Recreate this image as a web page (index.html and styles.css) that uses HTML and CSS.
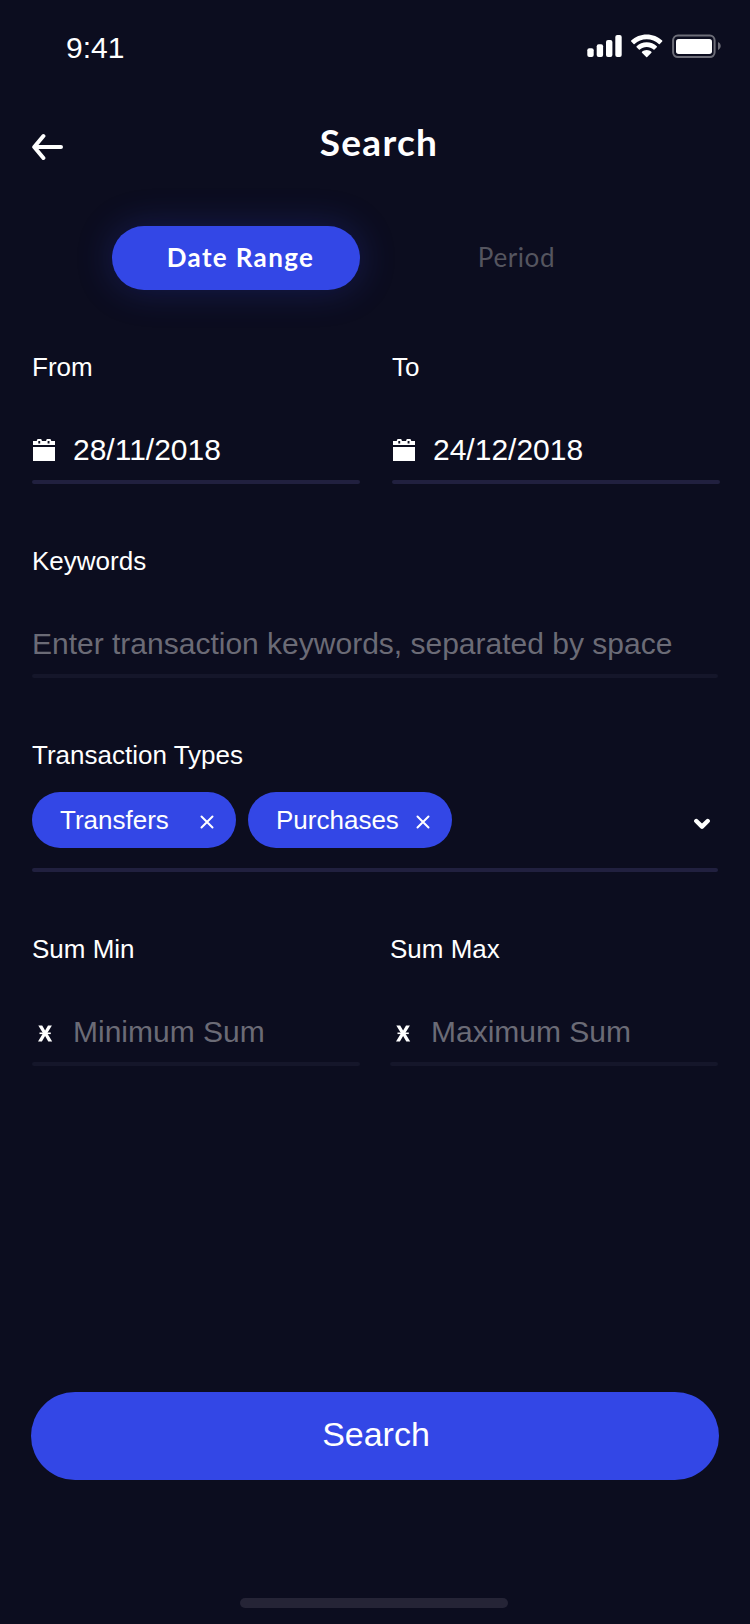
FILE: index.html
```html
<!DOCTYPE html>
<html lang="en">
<head>
<meta charset="utf-8">
<title>Search</title>
<link rel="stylesheet" href="styles.css">
</head>
<body>
<main class="screen">
  <div class="status">
    <span class="time">9:41</span>
    <svg class="status-icons" width="136" height="26" viewBox="0 0 136 26">
      <g fill="#fff">
        <rect x="0.3" y="15.3" width="6.4" height="8.7" rx="2"/>
        <rect x="9.7" y="11.3" width="6.4" height="12.7" rx="2"/>
        <rect x="19" y="7" width="6.4" height="17" rx="2"/>
        <rect x="28.3" y="2" width="6.4" height="22" rx="2"/>
        <path d="M59.7 17c1.800 0 3.500.7 4.700 1.800.3.300.3.700 0 1l-4.200 4.100c-.3.300-.7.300-1 0L55 19.800c-.3-.3-.3-.7 0-1 1.200-1.100 2.900-1.800 4.700-1.800z"/>
        <path d="M59.7 9.300c3.900 0 7.400 1.500 10.100 4 .3.300.3.700 0 1l-2.300 2.300c-.3.300-.7.300-1 0-1.800-1.700-4.200-2.700-6.800-2.700s-5 1-6.800 2.700c-.3.300-.7.300-1 0l-2.300-2.300c-.3-.3-.3-.7 0-1 2.700-2.500 6.200-4 10.100-4z"/>
        <path d="M59.700 1.600c6 0 11.400 2.300 15.500 6 .3.300.3.700 0 1l-2.400 2.400c-.3.300-.7.300-1 0-3.200-3-7.400-4.700-12.100-4.700s-8.900 1.700-12.100 4.700c-.3.300-.7.300-1 0l-2.400-2.400c-.3-.3-.3-.7 0-1 4.100-3.700 9.500-6 15.500-6z"/>
        <rect x="89" y="6" width="36" height="15" rx="2.700"/>
        <path d="M131 9v8c1.700-.7 2.700-2.300 2.700-4s-1-3.300-2.700-4z" opacity=".4"/>
      </g>
      <rect x="86.100" y="2.500" width="41.500" height="21.600" rx="4.800" fill="none" stroke="#fff" stroke-opacity=".4" stroke-width="2"/>
    </svg>
  </div>
  <header class="header">
    <svg class="back" width="32" height="28" viewBox="0 0 32 28" fill="none" stroke="#fff" stroke-width="4" stroke-linecap="round" stroke-linejoin="round"><path d="M11.400 3L2.200 14l9.200 11M2.400 14H29"/></svg>
    <h1 class="title">Search</h1>
  </header>
  <nav class="tabs">
    <span class="tab tab-active">Date Range</span>
    <span class="tab">Period</span>
  </nav>
  <section class="fields">
    <div class="row row-dates">
      <div class="field">
        <span class="label">From</span>
        <div class="value">
          <svg class="lead" width="24" height="24" viewBox="0 0 24 24" fill="#fff"><path fill-rule="evenodd" d="M1 3h3.700L5.500 1h3.700l.8 2h4l.8-2h3.700l.8 2H23v4H1zM6.300 3v2.500h1.900V3zM15.600 3v2.500h1.900V3zM1 9h22v14H1z"/></svg>
          <span class="text">28/11/2018</span>
        </div>
      </div>
      <div class="field">
        <span class="label">To</span>
        <div class="value">
          <svg class="lead" width="24" height="24" viewBox="0 0 24 24" fill="#fff"><path fill-rule="evenodd" d="M1 3h3.700L5.500 1h3.700l.8 2h4l.8-2h3.700l.8 2H23v4H1zM6.300 3v2.500h1.900V3zM15.600 3v2.500h1.900V3zM1 9h22v14H1z"/></svg>
          <span class="text">24/12/2018</span>
        </div>
      </div>
    </div>
    <div class="row">
      <div class="field field-dim">
        <span class="label">Keywords</span>
        <div class="value"><span class="text">Enter transaction keywords, separated by space</span></div>
      </div>
    </div>
    <div class="row">
      <div class="field">
        <span class="label">Transaction Types</span>
        <div class="chips">
          <span class="chip"><span>Transfers</span><svg class="remove" width="14" height="14" viewBox="0 0 14 14" stroke="#fff" stroke-width="2" stroke-linecap="round"><path d="M1.500 1.500l11 11M12.500 1.500l-11 11"/></svg></span>
          <span class="chip"><span>Purchases</span><svg class="remove" width="14" height="14" viewBox="0 0 14 14" stroke="#fff" stroke-width="2" stroke-linecap="round"><path d="M1.500 1.500l11 11M12.500 1.500l-11 11"/></svg></span>
          <svg class="chevron" width="18" height="12" viewBox="0 0 18 12" fill="none" stroke="#fff" stroke-width="4.400" stroke-linecap="round" stroke-linejoin="round"><path d="M3.300 3L9 8.600 14.700 3"/></svg>
        </div>
      </div>
    </div>
    <div class="row">
      <div class="field field-dim">
        <span class="label">Sum Min</span>
        <div class="value">
          <svg class="lead" width="24" height="24" viewBox="0 0 24 24" fill="#fff"><path d="M6.300 5.500h3.900l2.900 5 2.900-5h3.900l-4.700 7.700 5 8.300h-3.900l-3.200-5.600-3.200 5.600H6l5-8.300z"/><path d="M7.500 12.500h11.300v1.600H7.500z"/></svg>
          <span class="text">Minimum Sum</span>
        </div>
      </div>
      <div class="field field-dim">
        <span class="label">Sum Max</span>
        <div class="value">
          <svg class="lead" width="24" height="24" viewBox="0 0 24 24" fill="#fff"><path d="M6.300 5.500h3.900l2.900 5 2.900-5h3.900l-4.700 7.700 5 8.300h-3.900l-3.200-5.600-3.200 5.600H6l5-8.300z"/><path d="M7.500 12.500h11.300v1.600H7.500z"/></svg>
          <span class="text">Maximum Sum</span>
        </div>
      </div>
    </div>
  </section>
  <button class="submit">Search</button>
  <div class="home"></div>
</main>
</body>
</html>
```
FILE: styles.css
```css
* { box-sizing: border-box; }
body { margin: 0; background: #0c0d1f; }
svg { display: block; flex: none; }
.screen {
  width: 750px;
  height: 1624px;
  padding: 0 32px 16px;
  display: flex;
  flex-direction: column;
  background: #0c0d1f;
  color: #fff;
  font-family: "Liberation Sans", sans-serif;
}
.status {
  height: 112px;
  padding: 33px 0 0 34px;
  display: flex;
  justify-content: space-between;
  align-items: flex-start;
}
.time { font-size: 30px; line-height: 30px; }
.status-icons { margin-right: -5px; }
.header {
  height: 114px;
  display: grid;
  grid-template-columns: 32px 1fr 24px;
  align-items: start;
}
.back { margin-top: 21px; }
.title {
  margin: 8px 0 0;
  text-align: center;
  font: 700 37px/44px Lato, sans-serif;
  letter-spacing: 1.3px;
}
.tabs {
  width: 526px;
  height: 64px;
  margin-left: 80px;
  display: grid;
  grid-template-columns: 248px 1fr;
  gap: 32px;
}
.tab {
  padding-left: 3px;
  text-align: center;
  color: #55555f;
  font: 400 26px/62px Lato, sans-serif;
  letter-spacing: .6px;
}
.tab-active {
  padding-left: 9px;
  border-radius: 32px;
  background: #3347e6;
  box-shadow: 0 0 36px rgba(51, 71, 230, .25);
  color: #fff;
  font-weight: 700;
  letter-spacing: 1.35px;
}
.fields { padding-top: 58px; }
.row { height: 194px; display: flex; gap: 30px; }
.row-dates { gap: 32px; margin-right: -2px; }
.field {
  flex: 1;
  height: 136px;
  display: flex;
  flex-direction: column;
}
.field::after {
  content: "";
  height: 4px;
  margin-top: auto;
  border-radius: 2px;
  background: #21203f;
}
.field-dim::after { background: #15162a; }
.label { height: 44px; font-size: 26px; line-height: 38px; white-space: nowrap; }
.value { height: 84px; padding-top: 32px; display: flex; align-items: center; gap: 17px; }
.text { font-size: 30px; line-height: 34px; white-space: nowrap; }
.field-dim .text { color: #6b6b76; }
.chips { height: 56px; margin-top: 12px; display: flex; align-items: center; gap: 12px; }
.chip {
  width: 204px;
  height: 56px;
  padding: 0 22px 0 28px;
  display: flex;
  align-items: center;
  justify-content: space-between;
  border-radius: 28px;
  background: #3347e6;
  font-size: 26px;
}
.remove { margin-top: 3px; }
.chevron { margin: 8px 7px 0 auto; }
.submit {
  height: 88px;
  margin: 268px -1px 0;
  padding: 0 0 4px 2px;
  border: 0;
  border-radius: 44px;
  background: #3347e6;
  color: #fff;
  font: 34px/44px "Liberation Sans", sans-serif;
}
.home {
  width: 268px;
  height: 10px;
  margin: auto 0 0 208px;
  border-radius: 5px;
  background: #252436;
}
```
